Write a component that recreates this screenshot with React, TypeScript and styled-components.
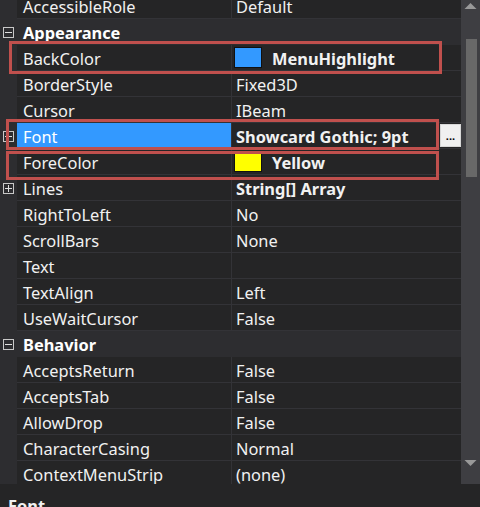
import React from "react";
import styled, { createGlobalStyle } from "styled-components";

const Global = createGlobalStyle`
  html, body { margin: 0; padding: 0; background: #252526; }
  body { font-family: "Noto Sans", "Open Sans", sans-serif; }
`;

const Frame = styled.div`
  width: 480px;
  height: 507px;
  display: grid;
  grid-template-rows: 484px 23px;
  overflow: hidden;
  background: #252526;
  color: #f1f1f1;
  font-size: 16.4px;
`;

const GridArea = styled.div`
  display: flex;
  min-height: 0;
`;

const Viewport = styled.div`
  position: relative;
  flex: 1;
  overflow: hidden;
  background: #2d2d30;
`;

const List = styled.div`
  margin-top: -7px;
  display: flex;
  flex-direction: column;
`;

const Row = styled.div`
  display: grid;
  grid-template-columns: 17px 215px 1fr;
  height: 26px;
`;

const Gutter = styled.div`
  display: flex;
  align-items: center;
  justify-content: center;
  background: #2d2d30;
  padding-right: 1px;
`;

const NameCell = styled.div<{ $selected?: boolean }>`
  display: flex;
  align-items: center;
  padding: 1px 0 0 6px;
  background: ${(p) => (p.$selected ? "#3399ff" : "#252526")};
  color: ${(p) => (p.$selected ? "#ffffff" : "#f1f1f1")};
  border-right: 1px solid #333337;
  border-bottom: 1px solid #333337;
  white-space: nowrap;
`;

const ValueCell = styled.div<{ $bold?: boolean }>`
  display: flex;
  align-items: center;
  padding: 1px 0 0 4px;
  background: #252526;
  border-bottom: 1px solid #333337;
  font-weight: ${(p) => (p.$bold ? 700 : 400)};
  white-space: nowrap;
  gap: 10px;
`;

const CategoryRow = styled.div`
  display: grid;
  grid-template-columns: 17px 1fr;
  height: 26px;
  background: #2d2d30;
`;

const CategoryName = styled.div`
  display: flex;
  align-items: center;
  padding: 1px 0 0 6px;
  font-weight: 700;
  color: #ffffff;
`;

const ToggleBox = styled.div`
  width: 9px;
  height: 9px;
  border: 1px solid #c8c8c8;
  position: relative;
  &::before {
    content: "";
    position: absolute;
    left: 1px;
    right: 1px;
    top: 4px;
    height: 1px;
    background: #e0e0e0;
  }
`;

const PlusBox = styled(ToggleBox)`
  &::after {
    content: "";
    position: absolute;
    top: 1px;
    bottom: 1px;
    left: 4px;
    width: 1px;
    background: #e0e0e0;
  }
`;

const Swatch = styled.span<{ $color: string }>`
  width: 26px;
  height: 19px;
  border: 1px solid #111;
  background: ${(p) => p.$color};
  flex: none;
  margin: -1px 0 0 -2px;
`;

const EllipsisButton = styled.div`
  margin: -1px 0 0 auto;
  width: 21px;
  height: 23px;
  background: #f0f0f0;
  border: 1px solid #d8d8d8;
  box-sizing: border-box;
  color: #000;
  font-size: 11px;
  font-weight: 700;
  display: flex;
  align-items: flex-end;
  justify-content: center;
  padding-bottom: 5px;
  line-height: 1;
`;

const Highlight = styled.div<{ $l: number; $t: number; $w: number; $h: number }>`
  position: absolute;
  left: ${(p) => p.$l}px;
  top: ${(p) => p.$t}px;
  width: ${(p) => p.$w}px;
  height: ${(p) => p.$h}px;
  border: 3px solid #c0504d;
  box-sizing: border-box;
  pointer-events: none;
`;

const Scrollbar = styled.div`
  width: 19px;
  background: #3e3e42;
  display: flex;
  flex-direction: column;
  align-items: center;
`;

const Arrow = styled.svg`
  display: block;
  flex: none;
`;

const Track = styled.div`
  flex: 1;
  width: 100%;
  display: flex;
  flex-direction: column;
  padding-top: 27px;
  padding-left: 5px;
  box-sizing: border-box;
`;

const Thumb = styled.div`
  width: 11px;
  height: 138px;
  background: #686868;
`;

const Description = styled.div`
  background: #252526;
  padding: 11px 8px 0;
  font-weight: 700;
  color: #f1f1f1;
  font-size: 16.4px;
  line-height: 1.3;
`;

type Prop =
  | { kind: "cat"; name: string }
  | {
      kind: "prop";
      name: string;
      value: string;
      bold?: boolean;
      swatch?: string;
      plus?: boolean;
      selected?: boolean;
      ellipsis?: boolean;
    };

const props: Prop[] = [
  { kind: "prop", name: "AccessibleRole", value: "Default" },
  { kind: "cat", name: "Appearance" },
  { kind: "prop", name: "BackColor", value: "MenuHighlight", bold: true, swatch: "#3399ff" },
  { kind: "prop", name: "BorderStyle", value: "Fixed3D" },
  { kind: "prop", name: "Cursor", value: "IBeam" },
  { kind: "prop", name: "Font", value: "Showcard Gothic; 9pt", bold: true, plus: true, selected: true, ellipsis: true },
  { kind: "prop", name: "ForeColor", value: "Yellow", bold: true, swatch: "#ffff00" },
  { kind: "prop", name: "Lines", value: "String[] Array", bold: true, plus: true },
  { kind: "prop", name: "RightToLeft", value: "No" },
  { kind: "prop", name: "ScrollBars", value: "None" },
  { kind: "prop", name: "Text", value: "" },
  { kind: "prop", name: "TextAlign", value: "Left" },
  { kind: "prop", name: "UseWaitCursor", value: "False" },
  { kind: "cat", name: "Behavior" },
  { kind: "prop", name: "AcceptsReturn", value: "False" },
  { kind: "prop", name: "AcceptsTab", value: "False" },
  { kind: "prop", name: "AllowDrop", value: "False" },
  { kind: "prop", name: "CharacterCasing", value: "Normal" },
  { kind: "prop", name: "ContextMenuStrip", value: "(none)" },
];

export default function App() {
  return (
    <>
      <Global />
      <Frame>
        <GridArea>
          <Viewport>
            <List>
              {props.map((p) =>
                p.kind === "cat" ? (
                  <CategoryRow key={p.name}>
                    <Gutter>
                      <ToggleBox />
                    </Gutter>
                    <CategoryName>{p.name}</CategoryName>
                  </CategoryRow>
                ) : (
                  <Row key={p.name}>
                    <Gutter>{p.plus ? <PlusBox /> : null}</Gutter>
                    <NameCell $selected={p.selected}>{p.name}</NameCell>
                    <ValueCell $bold={p.bold}>
                      {p.swatch ? <Swatch $color={p.swatch} /> : null}
                      <span>{p.value}</span>
                      {p.ellipsis ? <EllipsisButton>...</EllipsisButton> : null}
                    </ValueCell>
                  </Row>
                )
              )}
            </List>
            <Highlight $l={9} $t={41} $w={433} $h={33} />
            <Highlight $l={6} $t={119} $w={433} $h={31} />
            <Highlight $l={6} $t={151} $w={433} $h={29} />
          </Viewport>
          <Scrollbar>
            <Arrow width="19" height="12" viewBox="0 0 19 12">
              <polygon points="3.5,9 15.5,9 9.5,3" fill="#999999" />
            </Arrow>
            <Track>
              <Thumb />
            </Track>
            <Arrow width="19" height="26" viewBox="0 0 19 26">
              <polygon points="3.5,2 15.5,2 9.5,8" fill="#999999" />
            </Arrow>
          </Scrollbar>
        </GridArea>
        <Description>Font</Description>
      </Frame>
    </>
  );
}
